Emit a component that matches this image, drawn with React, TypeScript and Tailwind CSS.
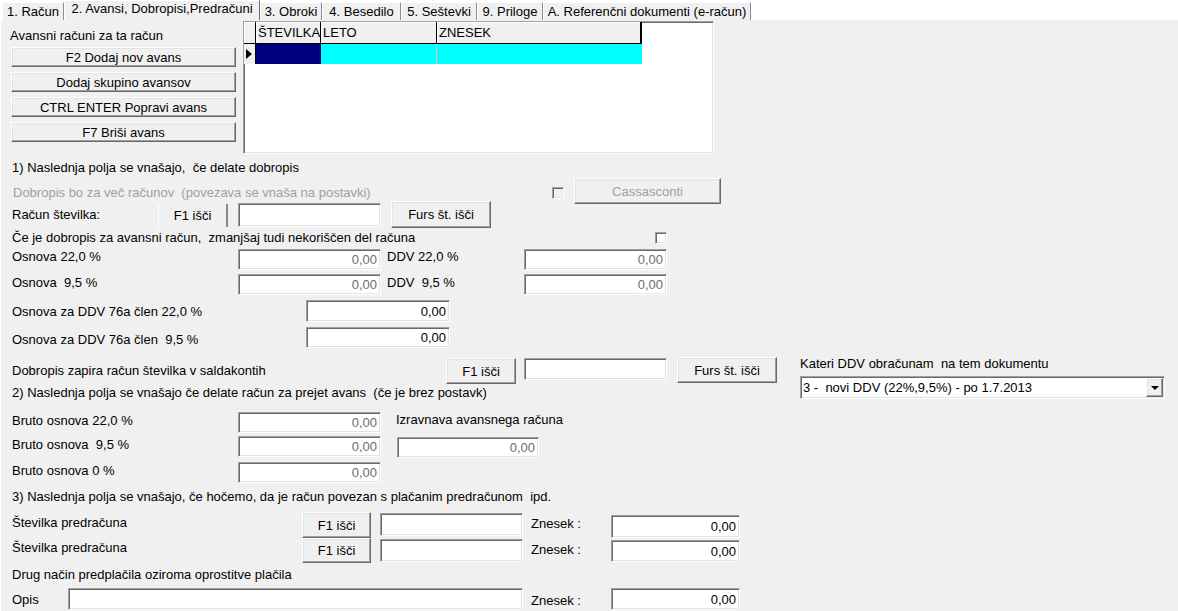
import React from "react";

// Classic Win32-style 3D edges
const sunken =
  "bg-white border border-t-[#a0a0a0] border-l-[#a0a0a0] border-r-white border-b-white shadow-[inset_1px_1px_0_#696969,inset_-1px_-1px_0_#e3e3e3]";
const raised =
  "bg-[#f0f0f0] border border-t-white border-l-white border-r-[#696969] border-b-[#696969] shadow-[inset_-1px_-1px_0_#a0a0a0,inset_1px_1px_0_#e3e3e3]";

type P = { className?: string; children?: React.ReactNode };

function Row({ className = "", children }: P) {
  return <div className={`flex items-start shrink-0 ${className}`}>{children}</div>;
}

function Lbl({ className = "", children }: P) {
  return <div className={`h-[15px] leading-[15px] shrink-0 ${className}`}>{children}</div>;
}

function Field({
  className = "",
  value,
  muted,
}: {
  className?: string;
  value?: string;
  muted?: boolean;
}) {
  return (
    <div className={`${sunken} shrink-0 flex items-center justify-end pr-[3px] ${className}`}>
      {value && <span className={muted ? "text-[#6d6d6d]" : "text-black"}>{value}</span>}
    </div>
  );
}

function Btn({ className = "", children }: P) {
  return (
    <div className={`${raised} shrink-0 flex items-center justify-center ${className}`}>
      {children}
    </div>
  );
}

function Check({ className = "" }: { className?: string }) {
  return (
    <div
      className={`shrink-0 w-[12px] h-[12px] border border-t-[#a0a0a0] border-l-[#a0a0a0] border-r-white border-b-white shadow-[inset_1px_1px_0_#696969,inset_-1px_-1px_0_#e3e3e3] ${className}`}
    />
  );
}

function Tab({ className = "", children }: P) {
  return (
    <div
      className={`shrink-0 bg-[#f0f0f0] border-t border-l border-t-white border-l-white border-r border-r-[#8c8c8c] flex justify-center ${className}`}
    >
      {children}
    </div>
  );
}

function AdvanceGrid() {
  const head =
    "h-[22px] bg-[#f0f0f0] border-r border-b border-black shadow-[inset_1px_1px_0_#fff] pl-[2px] pt-[3px] leading-[15px]";
  return (
    <div className={`${sunken} ml-[7px] mt-[1px] w-[471px] h-[133px] flex flex-col`}>
      <div className="flex">
        <div className={`${head} w-[12px]`} />
        <div className={`${head} w-[65px]`}>ŠTEVILKA</div>
        <div className={`${head} w-[116px]`}>LETO</div>
        <div className={`${head} w-[205px] border-r-2`}>ZNESEK</div>
      </div>
      <div className="flex h-[20px]">
        <div className="w-[12px] bg-[#f0f0f0] border-r border-black flex items-center pl-[2px]">
          <div className="w-0 h-0 border-y-[5px] border-y-transparent border-l-[6px] border-l-black" />
        </div>
        <div className="w-[65px] bg-[#000080]" />
        <div className="w-[116px] bg-[#00ffff] border-r border-[#c8c8c8]" />
        <div className="w-[205px] bg-[#00ffff]" />
      </div>
    </div>
  );
}

function VatSelect() {
  return (
    <div className={`${sunken} mt-[5px] w-[365px] h-[23px] flex items-center pl-[2px] pr-[1px]`}>
      <span className="flex-1">3 -  novi DDV (22%,9,5%) - po 1.7.2013</span>
      <div className={`${raised} w-[17px] h-[19px] flex items-center justify-center`}>
        <div className="w-0 h-0 border-x-[4px] border-x-transparent border-t-[4px] border-t-black" />
      </div>
    </div>
  );
}

export default function App() {
  return (
    <div className="w-[1178px] h-[611px] overflow-hidden bg-[#f0f0f0] text-black text-[13px] leading-[15px] whitespace-pre font-['Liberation_Sans',Arial,sans-serif]">
      {/* tab strip */}
      <div className="flex items-end h-[20px] bg-white pl-[2px]">
        <Tab className="w-[62px] h-[18px] pt-[1px]">1. Račun</Tab>
        <Tab className="w-[196px] h-[20px] pt-[0px] border-r-[#696969]">2. Avansi, Dobropisi,Predračuni</Tab>
        <Tab className="w-[62px] h-[18px] pt-[1px]">3. Obroki</Tab>
        <Tab className="w-[79px] h-[18px] pt-[1px]">4. Besedilo</Tab>
        <Tab className="w-[76px] h-[18px] pt-[1px]">5. Seštevki</Tab>
        <Tab className="w-[66px] h-[18px] pt-[1px]">9. Priloge</Tab>
        <Tab className="w-[208px] h-[18px] pt-[1px]">A. Referenčni dokumenti (e-račun)</Tab>
      </div>

      <div className="flex flex-col shadow-[inset_1px_0_0_#fff]">
        {/* advances list */}
        <Row className="h-[140px]">
          <div className="ml-[10px] w-[226px] flex flex-col">
            <Lbl className="mt-[8px]">Avansni računi za ta račun</Lbl>
            <div className="mt-[4px] ml-[1px] flex flex-col gap-[5px]">
              <Btn className="w-[225px] h-[20px]">F2 Dodaj nov avans</Btn>
              <Btn className="w-[225px] h-[20px]">Dodaj skupino avansov</Btn>
              <Btn className="w-[225px] h-[20px]">CTRL ENTER Popravi avans</Btn>
              <Btn className="w-[225px] h-[20px]">F7 Briši avans</Btn>
            </div>
          </div>
          <AdvanceGrid />
        </Row>

        {/* 1) credit note */}
        <Row className="h-[18px]">
          <Lbl className="ml-[12px]">1) Naslednja polja se vnašajo,  če delate dobropis</Lbl>
        </Row>
        <Row className="h-[23px]">
          <Lbl className="ml-[13px] mt-[7px] w-[539px] text-[#a0a0a0]">
            Dobropis bo za več računov  (povezava se vnaša na postavki)
          </Lbl>
          <Check className="mt-[9px] bg-[#f0f0f0]" />
          <Btn className="ml-[10px] w-[147px] h-[26px] text-[#a0a0a0]">Cassasconti</Btn>
        </Row>
        <Row className="h-[29px]">
          <Lbl className="ml-[12px] mt-[6px] w-[146px]">Račun številka:</Lbl>
          <div className="shrink-0 mt-[3px] w-[70px] h-[23px] bg-[#f0f0f0] border-l border-l-white border-r-2 border-r-[#8a8a8a] flex items-center justify-center">
            F1 išči
          </div>
          <Field className="ml-[10px] mt-[2px] w-[143px] h-[24px]" />
          <Btn className="ml-[10px] w-[100px] h-[27px]">Furs št. išči</Btn>
        </Row>
        <Row className="h-[11px]">
          <Lbl className="ml-[12px] w-[643px]">
            Če je dobropis za avansni račun,  zmanjšaj tudi nekoriščen del računa
          </Lbl>
          <Check className="mt-[2px] bg-white" />
        </Row>
        <Row className="h-[26px]">
          <Lbl className="ml-[12px] mt-[8px] w-[226px]">Osnova 22,0 %</Lbl>
          <Field className="mt-[8px] w-[143px] h-[21px]" value="0,00" muted />
          <Lbl className="ml-[6px] mt-[8px] w-[137px]">DDV 22,0 %</Lbl>
          <Field className="mt-[8px] w-[143px] h-[21px]" value="0,00" muted />
        </Row>
        <Row className="h-[33px]">
          <Lbl className="ml-[12px] mt-[8px] w-[226px]">Osnova  9,5 %</Lbl>
          <Field className="mt-[7px] w-[143px] h-[21px]" value="0,00" muted />
          <Lbl className="ml-[6px] mt-[8px] w-[137px]">DDV  9,5 %</Lbl>
          <Field className="mt-[7px] w-[143px] h-[21px]" value="0,00" muted />
        </Row>
        <Row className="h-[27px]">
          <Lbl className="ml-[12px] mt-[4px] w-[294px]">Osnova za DDV 76a člen 22,0 %</Lbl>
          <Field className="w-[144px] h-[22px]" value="0,00" />
        </Row>
        <Row className="h-[30px]">
          <Lbl className="ml-[12px] mt-[5px] w-[294px]">Osnova za DDV 76a člen  9,5 %</Lbl>
          <Field className="w-[144px] h-[21px]" value="0,00" />
        </Row>
        <Row className="h-[28px]">
          <Lbl className="ml-[12px] mt-[6px] w-[434px]">Dobropis zapira račun številka v saldakontih</Lbl>
          <Btn className="mt-[1px] w-[70px] h-[26px]">F1 išči</Btn>
          <Field className="ml-[8px] mt-[1px] w-[143px] h-[22px]" />
          <Btn className="ml-[10px] w-[100px] h-[26px]">Furs št. išči</Btn>
          <div className="ml-[23px] w-[365px] flex flex-col shrink-0">
            <Lbl className="-mt-[1px]">Kateri DDV obračunam  na tem dokumentu</Lbl>
            <VatSelect />
          </div>
        </Row>

        {/* 2) advance invoice */}
        <Row className="h-[27px]">
          <Lbl className="ml-[12px]">
            2) Naslednja polja se vnašajo če delate račun za prejet avans  (če je brez postavk)
          </Lbl>
        </Row>
        <Row className="h-[24px]">
          <Lbl className="ml-[12px] mt-[1px] w-[226px]">Bruto osnova 22,0 %</Lbl>
          <Field className="w-[143px] h-[21px]" value="0,00" muted />
          <Lbl className="ml-[15px] mt-[0px]">Izravnava avansnega računa</Lbl>
        </Row>
        <Row className="h-[26px]">
          <Lbl className="ml-[12px] mt-[1px] w-[226px]">Bruto osnova  9,5 %</Lbl>
          <Field className="w-[143px] h-[21px]" value="0,00" muted />
          <Field className="ml-[16px] mt-[1px] w-[142px] h-[21px]" value="0,00" muted />
        </Row>
        <Row className="h-[25px]">
          <Lbl className="ml-[12px] mt-[1px] w-[226px]">Bruto osnova 0 %</Lbl>
          <Field className="w-[143px] h-[21px]" value="0,00" muted />
        </Row>

        {/* 3) linked pro-forma */}
        <Row className="h-[25px]">
          <Lbl className="ml-[12px] mt-[2px]">
            3) Naslednja polja se vnašajo, če hočemo, da je račun povezan s plačanim predračunom  ipd.
          </Lbl>
        </Row>
        <Row className="h-[26px]">
          <Lbl className="ml-[12px] mt-[3px] w-[290px]">Številka predračuna</Lbl>
          <Btn className="w-[69px] h-[26px]">F1 išči</Btn>
          <Field className="ml-[9px] mt-[1px] w-[143px] h-[23px]" />
          <Lbl className="ml-[8px] mt-[4px] w-[80px]">Znesek :</Lbl>
          <Field className="mt-[3px] w-[129px] h-[23px]" value="0,00" />
        </Row>
        <Row className="h-[29px]">
          <Lbl className="ml-[12px] mt-[2px] w-[290px]">Številka predračuna</Lbl>
          <Btn className="w-[69px] h-[25px]">F1 išči</Btn>
          <Field className="ml-[9px] mt-[1px] w-[143px] h-[23px]" />
          <Lbl className="ml-[8px] mt-[4px] w-[80px]">Znesek :</Lbl>
          <Field className="mt-[2px] w-[129px] h-[22px]" value="0,00" />
        </Row>
        <Row className="h-[21px]">
          <Lbl className="ml-[12px]">Drug način predplačila oziroma oprostitve plačila</Lbl>
        </Row>
        <Row className="h-[23px]">
          <Lbl className="ml-[12px] mt-[4px] w-[56px]">Opis</Lbl>
          <Field className="w-[455px] h-[22px]" />
          <Lbl className="ml-[8px] mt-[5px] w-[80px]">Znesek :</Lbl>
          <Field className="w-[129px] h-[22px]" value="0,00" />
        </Row>
      </div>
    </div>
  );
}
